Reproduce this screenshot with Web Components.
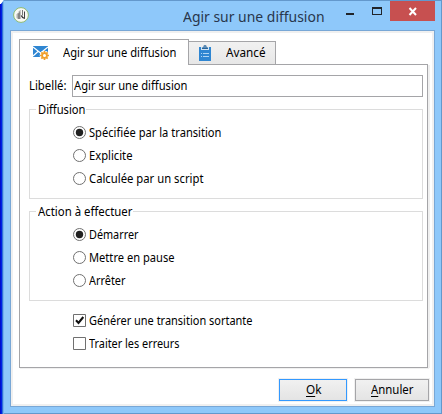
<!DOCTYPE html>
<html lang="fr"><head><meta charset="utf-8"><title>Agir sur une diffusion</title>
<style>
html,body{margin:0;height:100%;overflow:hidden}
body{background:#fff;font:12px/16px "Noto Sans","Open Sans",sans-serif;color:#000}
</style></head><body>
<dialog-window>
  <title-bar slot="title"></title-bar>
  <tab-strip slot="tabs"></tab-strip>
  <text-field slot="panel"></text-field>
  <group-box slot="panel" style="margin-top:5px">
    <fit-text slot="legend" w="47">Diffusion</fit-text>
    <choice-item checked><fit-text w="132">Spécifiée par la transition</fit-text></choice-item>
    <choice-item><fit-text w="43">Explicite</fit-text></choice-item>
    <choice-item><fit-text w="114">Calculée par un script</fit-text></choice-item>
  </group-box>
  <group-box slot="panel" style="margin-top:5px">
    <fit-text slot="legend" w="94">Action à effectuer</fit-text>
    <choice-item checked><fit-text w="49">Démarrer</fit-text></choice-item>
    <choice-item><fit-text w="85">Mettre en pause</fit-text></choice-item>
    <choice-item><fit-text w="36">Arrêter</fit-text></choice-item>
  </group-box>
  <choice-item box checked slot="panel" style="margin:8px 0 0 44px"><fit-text w="163">Générer une transition sortante</fit-text></choice-item>
  <choice-item box slot="panel" style="margin-left:44px"><fit-text w="90">Traiter les erreurs</fit-text></choice-item>
  <push-button slot="actions" primary style="width:68px"><fit-text w="15"><u>O</u>k</fit-text></push-button>
  <push-button slot="actions" style="width:74px"><fit-text w="42"><u>A</u>nnuler</fit-text></push-button>
</dialog-window>
<script>
const define = (name, html, setup) => {
  const t = document.createElement('template');
  t.innerHTML = html;
  customElements.define(name, class extends HTMLElement {
    constructor() {
      super();
      this.attachShadow({mode: 'open'}).append(t.content.cloneNode(true));
    }
    connectedCallback() { if (setup) setup(this); }
  });
};

// Text run condensed horizontally so that it fills the width in "w".
define('fit-text', `<style>:host{display:inline-block;white-space:nowrap;flex:none}span{display:inline-block;transform-origin:0 50%}
::slotted(u){text-decoration-thickness:1px;text-underline-offset:2px}</style><span><slot></slot></span>`, el => {
  const s = el.shadowRoot.querySelector('span');
  const natural = s.getBoundingClientRect().width;
  const w = +el.getAttribute('w');
  s.style.transform = 'scaleX(' + (w + .5) / natural + ')';
  el.style.width = w + 'px';
});

define('dialog-window', `<style>
:host{display:flex;flex-direction:column;box-sizing:border-box;width:442px;height:414px;margin:0;
 padding:0 7px 7px 10px;background:linear-gradient(90deg,#0010cc 0 1px,#0022e4 1px 2px,#3070d8 2px 3px,#75b2ec 3px 4px,transparent 4px),linear-gradient(#6398cc,#6398cc) right/1px 100% no-repeat,linear-gradient(#6398cc,#6398cc) 0 0/100% 1px no-repeat,linear-gradient(#6398cc,#6398cc) 0 100%/100% 1px no-repeat,#8ec8fa;
 clip-path:polygon(4px 0,100% 0,100% 100%,0 100%,0 4px,1px 4px)}
.client{box-sizing:border-box;height:377px;border:1px solid #78a7d6;background:#fff;box-shadow:inset 0 0 0 2px #f0f0f0;
 padding:8px 5px 5px 8px;display:flex;flex-direction:column}
.panel{box-sizing:border-box;width:409px;height:303px;border:1px solid #a5a5a8;border-top:0;padding:10px 4px 0 9px;
 box-shadow:2px 0 #f0f0f0,1px 1px #f0f0f0;display:flex;flex-direction:column}
.actions{display:flex;justify-content:flex-end;gap:8px;margin-top:11px}
</style><slot name="title"></slot><div class="client"><slot name="tabs"></slot><div class="panel"><slot name="panel"></slot></div><div class="actions"><slot name="actions"></slot></div></div>`);

define('title-bar', `<style>
:host{display:grid;grid-template-columns:173px 1fr 97px;height:30px;flex:none}
.app{padding:7px 0 0 3px}.app svg,.win svg{display:block}
.name{font-size:15px;line-height:20px;padding-top:6px;color:#28364c}
</style><div class="app"><svg width="16" height="16" viewBox="0 0 16 16"><circle cx="8" cy="8" r="7.4" fill="#f8f9f5" stroke="#8cba70"/><path d="M3.5 7.2 5 6v6L3.500 11z" fill="#b0b0b0"/><path d="M5 6.500 7.500 4v8H5z" fill="#858585"/><path d="M5.500 5 7.500 3.500" stroke="#999"/><path d="M9.500 3v5.500" stroke="#777"/><path d="M8.300 8.500q1 2.700 3.500 3" fill="none" stroke="#333" stroke-width="1.200"/><path d="M11.500 4.500v7" stroke="#444"/></svg></div>
<div class="name"><fit-text w="141">Agir sur une diffusion</fit-text></div>
<div class="win"><svg width="97" height="22" shape-rendering="crispEdges"><path d="M8 13h8v2H8z" fill="#20242a"/><path d="M34 7h10v8H34zM35 9v5h8V9z" fill-rule="evenodd" fill="#20242a"/><path d="M52 1h45v20H52z" fill="#c75050"/><path d="M71.5 8 78 15M78 8l-6.500 7" stroke="#fff" stroke-width="2" shape-rendering="auto"/></svg></div>`);

define('tab-strip', `<style>
:host{display:flex;align-items:flex-end;height:26px;flex:none;width:409px}
.tab{box-sizing:border-box;display:flex;border:1px solid #a5a5a8}
.on{width:170px;height:26px;border-bottom:0;padding:5px 0 0 10px}
.off{width:88px;height:24px;background:linear-gradient(#f1f1f1,#e7e7e7);padding:3px 0 0 9px;margin-left:-1px}
.rest{flex:1;height:1px;background:#a5a5a8}
svg{flex:none}
</style>
<div class="tab on"><svg width="20" height="16" viewBox="0 0 20 16" style="margin-right:13px"><path d="M3 1h15v11H3z" fill="#2f86d2"/><path d="m3 2 7.500 6L18 2M3 11l5-4.500M18 11l-5-4.500" fill="none" stroke="#fff" stroke-width="1.200"/><circle cx="14.500" cy="10.500" r="4.800" fill="#fff"/><circle cx="14.500" cy="10.500" r="2.400" fill="none" stroke="#f0a02c" stroke-width="1.800"/><path d="M14.500 6v2M14.500 13v2M10 10.500h2M17 10.500h2M11.300 7.300l1.400 1.400M16.300 12.300l1.400 1.400M11.300 13.700l1.400-1.400M16.300 8.700l1.400-1.400" stroke="#f0a02c" stroke-width="1.700"/></svg><fit-text w="113">Agir sur une diffusion</fit-text></div>
<div class="tab off"><svg width="14" height="17" viewBox="0 0 14 17" style="margin-right:14px"><path d="M1 2h12v14H1z" fill="#2f86d2"/><path d="M3 2h8v3H3z" fill="#d5e4f1"/><path d="M4 4V2.500h1.500V1.300q0-1 1-1h1q1 0 1 1v1.200H10V4z" fill="#27659c"/><path d="M6.500 1.500h1v1h-1z" fill="#fff"/><path d="M3 8.500h1M5 8.500h6M3 11.500h1M5 11.500h6" stroke="#b0d5f3"/></svg><fit-text w="39">Avancé</fit-text></div><div class="rest"></div>`);

define('text-field', `<style>
:host{display:flex;align-items:center;height:22px;flex:none}
.box{box-sizing:border-box;flex:1;height:22px;border:1px solid #a5a5a8;padding:2px 0 0 1px;margin-left:6px}
</style><fit-text w="37">Libellé:</fit-text><div class="box"><fit-text w="113">Agir sur une diffusion</fit-text></div>`);

define('group-box', `<style>
:host{display:block;flex:none;height:97px}
.legend{display:flex;align-items:center;height:16px}
.legend::before,.legend::after{content:"";height:1px;background:#dcdcdc;width:7px;margin-top:-1px}
.legend::after{flex:1;width:auto}
.legend ::slotted(*){margin:0 1px 0 2px}
.body{box-sizing:border-box;height:90px;margin-top:-9px;border:1px solid #dcdcdc;border-top:0;padding:12px 0 0 43px}
</style><div class="legend"><slot name="legend"></slot></div><div class="body"><slot></slot></div>`);

define('choice-item', `<style>
:host{display:flex;align-items:center;height:23px;flex:none}
svg{display:none;margin-right:3px;flex:none}
:host([box]) .box,:host(:not([box])) .radio{display:block}
:host(:not([checked])) .mark{display:none}
</style>
<svg class="radio" width="13" height="13"><circle cx="6.500" cy="6.500" r="6" fill="#fff" stroke="#707070"/><circle class="mark" cx="6.500" cy="6.500" r="3.700" fill="#212121"/></svg>
<svg class="box" width="13" height="13"><path d="M.5.5h12v12H.5z" fill="#fff" stroke="#707070"/><path class="mark" d="m3 6.200 2.500 2.700L10.300 3" fill="none" stroke="#111" stroke-width="2.100"/></svg><slot></slot>`);

define('push-button', `<style>
:host{display:flex;justify-content:center;align-items:center;box-sizing:border-box;height:22px;border:1px solid #a5a5a8;background:linear-gradient(#f1f1f1,#e4e4e4);box-shadow:0 0 0 1px #f0f0f0}
:host([primary]){border-color:#3399ff}
</style><slot></slot>`);
</script></body></html>
